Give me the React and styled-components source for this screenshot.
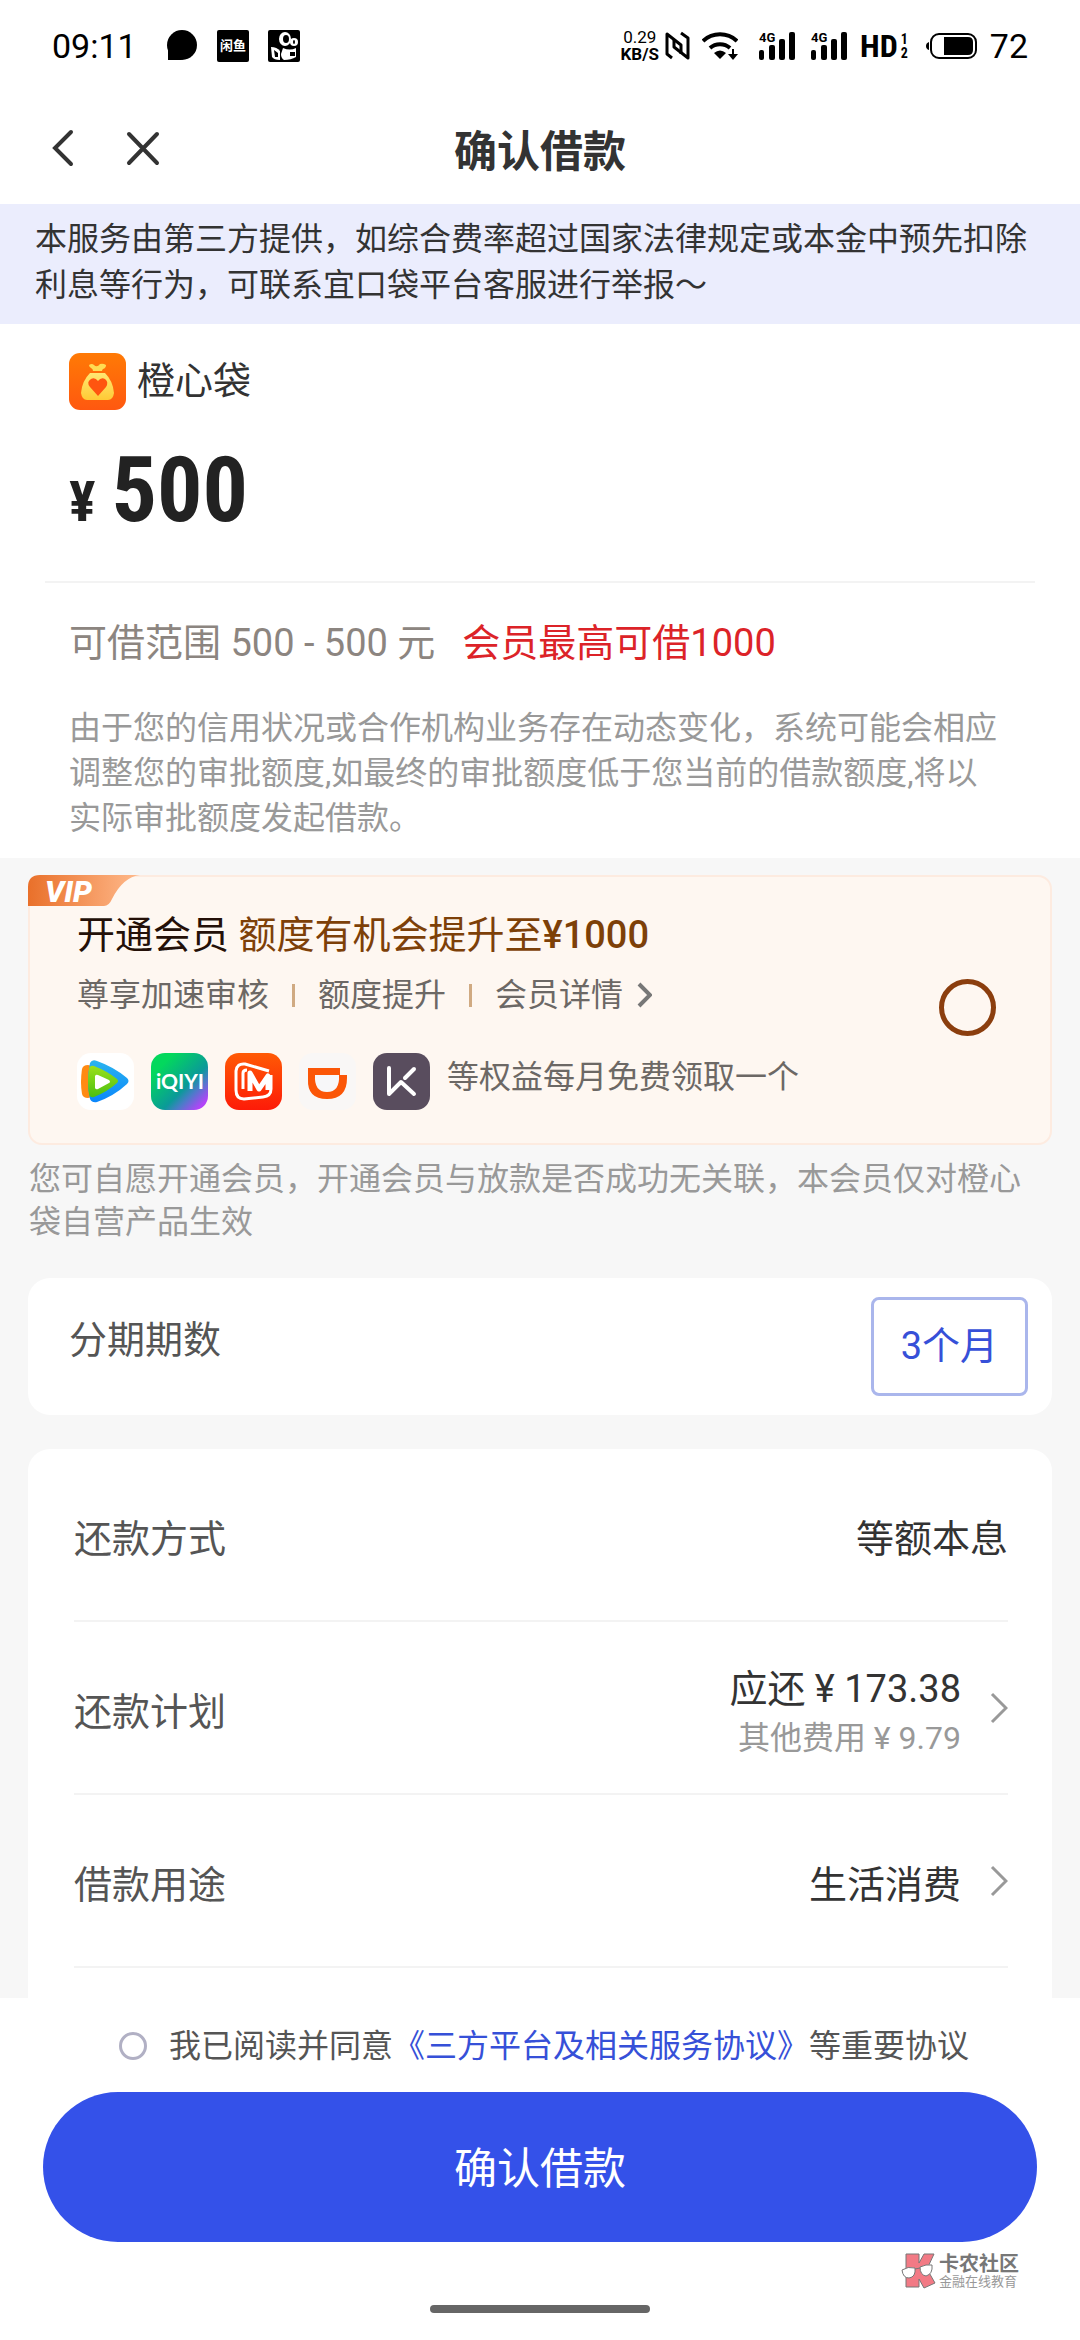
import React, { useState } from "react";
import styled, { createGlobalStyle } from "styled-components";

const rows = [
  { label: "还款方式", value: "等额本息" },
  { label: "还款计划", value: "应还 ¥ 173.38", extra: "其他费用 ¥ 9.79", link: true },
  { label: "借款用途", value: "生活消费", link: true },
];

const Chevron = ({ size, width, color }) => (
  <svg width={size / 2 + 2} height={size} viewBox={`0 0 ${size / 2 + 2} ${size}`} fill="none" stroke={color} strokeWidth={width}>
    <path d={`M2 2 L${size / 2} ${size / 2} L2 ${size - 2}`} />
  </svg>
);

const Signal = () => (
  <svg width="38" height="30" viewBox="0 0 38 30">
    <rect x="1" y="19" width="5" height="10" rx="2" />
    <rect x="11" y="14" width="6" height="15" rx="2" />
    <rect x="21" y="8" width="6" height="21" rx="2" />
    <rect x="31" y="1" width="6" height="28" rx="2" />
    <text x="1" y="11" fontSize="13" fontWeight="700" fontFamily="Roboto, sans-serif">4G</text>
  </svg>
);

const StatusIcons = () => (
  <>
    <svg width="32" height="32" viewBox="0 0 32 32">
      <circle cx="16" cy="15" r="15" />
      <path d="M2 16v14h14z" />
    </svg>
    <svg width="32" height="32" viewBox="0 0 32 32">
      <rect width="32" height="32" rx="2" />
      <text x="3" y="20" fontSize="13" fontWeight="700" fill="#fff" fontFamily="Noto Sans CJK SC, sans-serif">闲鱼</text>
    </svg>
    <svg width="32" height="32" viewBox="0 0 32 32">
      <rect width="32" height="32" rx="2" />
      <g fill="#fff">
        <ellipse cx="17" cy="9" rx="6" ry="7" />
        <ellipse cx="26" cy="12" rx="4" ry="4" />
        <path d="M3 17q6 0 9 4v9q-6 0-8-3z" />
        <path d="M15 18q7 3 13 0v9q-5 3-12 3q-3-2-3-6z" />
      </g>
      <ellipse cx="18" cy="9" rx="3" ry="4" />
      <ellipse cx="26" cy="12" rx="1" ry="2" />
      <path d="M6 20l4 3v4H7zM22 22h5v4h-5z" />
    </svg>
  </>
);

const NfcIcon = () => (
  <svg width="25" height="30" viewBox="0 0 25 30" fill="none" stroke="#000" strokeWidth="3" strokeLinejoin="round">
    <path d="M7 27L2 23V3l14 11v9" />
    <path d="M16 2l7 5v20L9 16V9" />
  </svg>
);

const WifiIcon = () => (
  <svg width="36" height="30" viewBox="0 0 36 30" fill="none" stroke="#000" strokeWidth="4">
    <path d="M1 10a25 25 0 0 1 34 0" />
    <path d="M8 17a15 15 0 0 1 20 0" />
    <path d="M12 22q6-5 12 0l-6 6z" fill="#000" stroke="none" />
    <path d="M31 18v7" strokeWidth="2" />
    <path d="M26 23h10l-5 6z" fill="#000" stroke="none" />
  </svg>
);

const BatteryIcon = () => (
  <svg width="52" height="28" viewBox="0 0 52 28">
    <path d="M3 10v8q-3-1-3-4t3-4z" />
    <rect x="5" y="2" width="45" height="24" rx="8" fill="none" stroke="#000" strokeWidth="2" />
    <path d="M18 5h24q5 0 5 5v8q0 5-5 5H18z" />
  </svg>
);

const BagLogo = () => (
  <svg width="57" height="57" viewBox="0 0 57 57">
    <defs>
      <linearGradient id="bagBg" x1="0" y1="0" x2="0" y2="1">
        <stop offset="0" stopColor="#ff7a05" />
        <stop offset="1" stopColor="#ff5810" />
      </linearGradient>
      <linearGradient id="bagBody" x1="0" y1="0" x2="0" y2="1">
        <stop offset="0" stopColor="#ffe873" />
        <stop offset="1" stopColor="#ffca35" />
      </linearGradient>
    </defs>
    <rect width="57" height="57" rx="11" fill="url(#bagBg)" />
    <path d="M20 12q3-2 5 0q3 3 6-1q3-1 6 1q0 3-3 4q-1 1-1 2h-9q0-2-2-3q-2-1-2-3z" fill="#ffdc52" />
    <path d="M21 20h15q8 8 9 20q-1 7-6 7H18q-5 0-6-7q1-12 9-20z" fill="url(#bagBody)" />
    <path d="M29 43L21 34q-4-5 1-8q4-2 7 2q3-4 7-2q4 3 1 8z" fill="#ff5510" />
  </svg>
);

const TencentLogo = () => (
  <svg width="57" height="57" viewBox="0 0 57 57">
    <defs>
      <linearGradient id="tencentGreen" x1="0" y1="0" x2="0" y2="1">
        <stop offset="0" stopColor="#9be01a" />
        <stop offset="1" stopColor="#4cbf10" />
      </linearGradient>
      <linearGradient id="tencentBlue" x1="0" y1="0" x2="0" y2="1">
        <stop offset="0" stopColor="#2bb4ee" />
        <stop offset="1" stopColor="#0a86fb" />
      </linearGradient>
    </defs>
    <rect width="57" height="57" rx="14" fill="#fff" />
    <path d="M5 16q1-4 6-4l4 1v31l-4 1q-5 0-6-4q-2-12 0-25z" fill="#ff8a12" />
    <path d="M13 10q2-4 7-2q17 6 30 17q3 3 0 6q-13 12-30 18q-5 1-7-3q-4-18 0-36z" fill="url(#tencentBlue)" />
    <path d="M12 16q1-4 5-3q13 5 23 13q2 2 0 4q-10 9-23 14q-4 1-5-3q-2-13 0-25z" fill="url(#tencentGreen)" />
    <path d="M18 23q1-2 3-1l11 5q2 2 0 3l-11 6q-2 1-3-1z" fill="#fff" />
  </svg>
);

const IqiyiLogo = () => (
  <svg width="57" height="57" viewBox="0 0 57 57">
    <defs>
      <linearGradient id="iqiyi" x1="0" y1="0" x2="1" y2="1">
        <stop offset="0.2" stopColor="#03d85d" />
        <stop offset="0.6" stopColor="#0a9a98" />
        <stop offset="0.72" stopColor="#4a7cc8" />
        <stop offset="0.9" stopColor="#b244f8" />
      </linearGradient>
    </defs>
    <rect width="57" height="57" rx="14" fill="url(#iqiyi)" />
    <text x="29" y="36" fontSize="21" fontWeight="700" fill="#fff" textAnchor="middle" fontFamily="Lato, sans-serif">iQIYI</text>
  </svg>
);

const MangoLogo = () => (
  <svg width="57" height="57" viewBox="0 0 57 57" fill="none" stroke="#fff" strokeLinejoin="round">
    <defs>
      <linearGradient id="mango" x1="0" y1="0" x2="0" y2="1">
        <stop offset="0" stopColor="#ff5a05" />
        <stop offset="1" stopColor="#fd1b08" />
      </linearGradient>
    </defs>
    <rect width="57" height="57" rx="14" fill="url(#mango)" stroke="none" />
    <path d="M44 18L20 11q-8-1-9 7v19q0 9 8 9l19-2q8-1 8-8V22" strokeWidth="3" />
    <path d="M18 36V20q0-3 4-3" strokeWidth="3" />
    <path d="M25 38V20l9 16l9-13v14" strokeWidth="5" />
  </svg>
);

const DidiLogo = () => (
  <svg width="57" height="57" viewBox="0 0 57 57">
    <rect width="57" height="57" rx="14" fill="#f9f7f6" />
    <path d="M9 15h32v7h7v3q0 21-20 21T9 26z" fill="#fb5607" />
    <path d="M16 22h24q1 17-12 17T16 22z" fill="#f7f7f9" />
  </svg>
);

const KeepLogo = () => (
  <svg width="57" height="57" viewBox="0 0 57 57" fill="none" stroke="#fff" strokeWidth="4" strokeLinecap="round" strokeLinejoin="round">
    <rect width="57" height="57" rx="14" fill="#594d5e" stroke="none" />
    <path d="M16 15v26L28 29L41 41" />
    <path d="M32 25l9-9" />
  </svg>
);

const VipBadge = () => (
  <svg width="112" height="31" viewBox="0 0 112 31" overflow="visible">
    <defs>
      <linearGradient id="vip" x1="0" y1="0" x2="1" y2="0">
        <stop offset="0" stopColor="#e9702a" />
        <stop offset="1" stopColor="#ffba8c" />
      </linearGradient>
    </defs>
    <path d="M0 31V12Q0 0 12 0h100q-17 2-28 24q-3 7-8 7z" fill="url(#vip)" />
    <text x="17" y="27" fontSize="30" fontWeight="900" fontStyle="italic" fill="#fff" fontFamily="Roboto, sans-serif">VIP</text>
  </svg>
);

const WatermarkLogo = () => (
  <svg width="36" height="36" viewBox="0 0 36 36" stroke="#777" strokeWidth="1">
    <path d="M5 1h13v9l5-9h10l-7 15l8 14l-11 5l-5-9v8H5z" fill="#f27a85" />
    <path d="M1 17q6-4 13-2q1 9-6 10q-6 0-7-8z" fill="#fff" />
    <path d="M19 14q6-3 12-2q1 9-6 11q-6-1-6-9z" fill="#fff" />
    <path d="M14 16l5-1" />
  </svg>
);

const App = () => {
  const [vip, setVip] = useState(false);
  const [agreed, setAgreed] = useState(false);

  return (
    <Page>
      <GlobalStyle />
      <StatusBar>
        <Clock>09:11</Clock>
        <StatusIcons />
        <StatusRight>
          <Network>
            <Speed>
              <span>0.29</span>
              <b>KB/S</b>
            </Speed>
            <NfcIcon />
          </Network>
          <WifiIcon />
          <Signals>
            <Signal />
            <Signal />
          </Signals>
          <Hd>
            HD
            <HdNumbers>
              <span>1</span>
              <span>2</span>
            </HdNumbers>
          </Hd>
          <BatteryIcon />
          <Clock>72</Clock>
        </StatusRight>
      </StatusBar>
      <Header>
        <HeaderButtons>
          <IconButton aria-label="返回">
            <svg width="24" height="38" viewBox="0 0 24 38" fill="none" stroke="#333" strokeWidth="4" strokeLinecap="round">
              <path d="M19 3L3 19l16 16" />
            </svg>
          </IconButton>
          <IconButton aria-label="关闭">
            <svg width="34" height="38" viewBox="0 0 34 38" fill="none" stroke="#333" strokeWidth="4" strokeLinecap="round">
              <path d="M3 5l28 29M31 5L3 34" />
            </svg>
          </IconButton>
        </HeaderButtons>
        <Title>确认借款</Title>
      </Header>
      <Notice>
        本服务由第三方提供，如综合费率超过国家法律规定或本金中预先扣除利息等行为，可联系宜口袋平台客服进行举报～
      </Notice>
      <Loan>
        <Product>
          <BagLogo />
          橙心袋
        </Product>
        <Amount>
          <Yen>¥</Yen>500
        </Amount>
        <Range>
          <span>可借范围 500 - 500 元</span>
          <RangeVip>会员最高可借1000</RangeVip>
        </Range>
        <Hint>
          由于您的信用状况或合作机构业务存在动态变化，系统可能会相应调整您的审批额度,如最终的审批额度低于您当前的借款额度,将以实际审批额度发起借款。
        </Hint>
      </Loan>
      <Content>
        <VipCard>
          <Badge>
            <VipBadge />
          </Badge>
          <div>
            <VipTitle>
              开通会员 <Brown>额度有机会提升至<b>¥1000</b></Brown>
            </VipTitle>
            <Perks>
              <span>尊享加速审核</span>
              <Bar />
              <span>额度提升</span>
              <Bar />
              <PerkLink href="#vip">
                会员详情
                <Chevron size={26} width={4} color="#777" />
              </PerkLink>
            </Perks>
            <Apps>
              <TencentLogo />
              <IqiyiLogo />
              <MangoLogo />
              <DidiLogo />
              <KeepLogo />
              <AppsText>等权益每月免费领取一个</AppsText>
            </Apps>
          </div>
          <VipCheck
            type="checkbox"
            aria-label="开通会员"
            checked={vip}
            onChange={(e) => setVip(e.target.checked)}
          />
        </VipCard>
        <Note>
          您可自愿开通会员，开通会员与放款是否成功无关联，本会员仅对橙心袋自营产品生效
        </Note>
        <TermCard>
          <TermLabel>分期期数</TermLabel>
          <TermButton>3个月</TermButton>
        </TermCard>
        <Details>
          {rows.map((row) => (
            <Row key={row.label}>
              <RowText>{row.label}</RowText>
              <RowValue>
                <RowText>
                  {row.value}
                  {row.extra && <Extra>{row.extra}</Extra>}
                </RowText>
                {row.link && <Chevron size={32} width={3} color="#999" />}
              </RowValue>
            </Row>
          ))}
        </Details>
      </Content>
      <Footer>
        <Agreement>
          <AgreeCheck
            id="agree"
            type="checkbox"
            checked={agreed}
            onChange={(e) => setAgreed(e.target.checked)}
          />
          <label htmlFor="agree">
            我已阅读并同意<Link href="#agreement">《三方平台及相关服务协议》</Link>等重要协议
          </label>
        </Agreement>
        <Submit>确认借款</Submit>
        <Watermark>
          <WatermarkLogo />
          <div>
            <Brand>卡农社区</Brand>
            <Slogan>金融在线教育</Slogan>
          </div>
        </Watermark>
        <HomeBar />
      </Footer>
    </Page>
  );
};

const GlobalStyle = createGlobalStyle`
  * {
    box-sizing: border-box;
  }
  body {
    margin: 0;
    background: #fff;
    font-family: Roboto, "Noto Sans CJK SC", sans-serif;
  }
  button {
    font-family: inherit;
  }
  svg {
    display: block;
    flex-shrink: 0;
  }
`;

const Page = styled.div`
  min-height: 100vh;
  display: flex;
  flex-direction: column;
`;

const StatusBar = styled.div`
  height: 92px;
  padding: 0 52px;
  display: flex;
  align-items: center;
  gap: 19px;
  color: #000;
`;

const Clock = styled.span`
  margin-right: 10px;
  font-size: 34px;
`;

const StatusRight = styled.div`
  margin-left: auto;
  display: flex;
  align-items: center;
  gap: 12px;

  ${Clock} {
    margin: 0;
  }
`;

const Network = styled.div`
  display: flex;
  align-items: center;
  gap: 6px;
`;

const Speed = styled.div`
  display: flex;
  flex-direction: column;
  align-items: center;
  font-size: 17px;
  line-height: 17px;
`;

const Signals = styled.div`
  margin-left: 8px;
  display: flex;
  gap: 14px;
`;

const Hd = styled.div`
  margin-right: 6px;
  display: flex;
  align-items: center;
  gap: 3px;
  font-size: 32px;
  font-weight: 700;
  font-family: "Roboto Condensed", Roboto, sans-serif;
`;

const HdNumbers = styled.div`
  display: flex;
  flex-direction: column;
  font-size: 14px;
  line-height: 14px;
`;

const Header = styled.header`
  height: 112px;
  padding: 0 52px;
  display: grid;
  grid-template-columns: 1fr auto 1fr;
  align-items: center;
`;

const HeaderButtons = styled.div`
  display: flex;
  gap: 50px;
`;

const IconButton = styled.button`
  padding: 0;
  border: none;
  background: none;
  cursor: pointer;
`;

const Title = styled.h1`
  margin: 0;
  font-size: 43px;
  font-weight: 700;
  color: #333;
`;

const Notice = styled.p`
  margin: 0;
  padding: 12px 35px 16px;
  background: #ebedfd;
  color: #333;
  font-size: 32px;
  line-height: 46px;
`;

const Loan = styled.section`
  padding: 29px 45px 17px;
`;

const Product = styled.div`
  padding: 0 24px;
  display: flex;
  align-items: center;
  gap: 11px;
  font-size: 38px;
  line-height: 57px;
  color: #333;
`;

const Amount = styled.div`
  height: 173px;
  padding: 36px 24px 0;
  border-bottom: 2px solid #f3f3f3;
  font-family: "Roboto Condensed", Roboto, sans-serif;
  font-size: 90px;
  line-height: 90px;
  font-weight: 700;
  color: #222;
`;

const Yen = styled.span`
  margin-right: 16px;
  font-size: 56px;
`;

const Range = styled.div`
  padding: 33px 24px 35px;
  display: flex;
  gap: 27px;
  font-size: 38px;
  line-height: 55px;
  color: #8c8580;
`;

const RangeVip = styled.span`
  color: #dc2328;
`;

const Hint = styled.p`
  margin: 0;
  padding: 0 36px 0 24px;
  font-size: 32px;
  line-height: 45px;
  color: #999;
`;

const Content = styled.main`
  flex: 1;
  display: flex;
  flex-direction: column;
  padding: 17px 28px 0;
  background: #f7f7f7;
`;

const VipCard = styled.section`
  position: relative;
  padding: 28px 54px 33px 47px;
  display: flex;
  align-items: center;
  justify-content: space-between;
  border: 2px solid #fdebe0;
  border-radius: 14px;
  background: #fef7f1;
`;

const Badge = styled.div`
  position: absolute;
  top: -2px;
  left: -2px;
`;

const VipTitle = styled.h2`
  margin: 0;
  font-size: 38px;
  line-height: 60px;
  font-weight: 400;
  color: #241008;
`;

const Brown = styled.span`
  color: #7d4008;

  b {
    font-weight: 500;
  }
`;

const Perks = styled.div`
  display: flex;
  align-items: center;
  gap: 23px;
  font-size: 32px;
  line-height: 60px;
  color: #6c6865;
`;

const Bar = styled.span`
  width: 3px;
  height: 23px;
  background: #d0aa82;
`;

const PerkLink = styled.a`
  display: flex;
  align-items: center;
  gap: 14px;
  color: inherit;
  text-decoration: none;
`;

const Apps = styled.div`
  margin-top: 28px;
  display: flex;
  align-items: center;
  gap: 17px;
`;

const AppsText = styled.span`
  padding-bottom: 10px;
  font-size: 32px;
  line-height: 46px;
  color: #6c6865;
`;

const VipCheck = styled.input`
  appearance: none;
  width: 57px;
  height: 57px;
  margin: 0;
  border: 5px solid #8b3e0e;
  border-radius: 50%;

  &:checked {
    background: #8b3e0e;
  }
`;

const Note = styled.p`
  margin: 0 0 34px;
  padding: 13px 1px 0;
  font-size: 32px;
  line-height: 43px;
  color: #999;
`;

const TermCard = styled.section`
  margin-bottom: 34px;
  padding: 19px 24px 19px 41px;
  display: flex;
  align-items: flex-start;
  justify-content: space-between;
  border-radius: 22px;
  background: #fff;
`;

const TermLabel = styled.span`
  font-size: 38px;
  line-height: 86px;
  color: #555;
`;

const TermButton = styled.button`
  padding: 0 27px;
  border: 3px solid #aab6ec;
  border-radius: 8px;
  background: #fff;
  color: #3650d8;
  font-size: 38px;
  line-height: 93px;
`;

const Details = styled.section`
  flex: 1;
  padding: 0 44px 30px 46px;
  border-radius: 22px 22px 0 0;
  background: #fff;
`;

const Row = styled.div`
  min-height: 173px;
  display: flex;
  align-items: center;
  justify-content: space-between;
  border-bottom: 2px solid #f3f3f3;
  font-size: 38px;
  line-height: 52px;
  color: #555;
`;

const RowText = styled.div`
  padding-top: 8px;
`;

const RowValue = styled.div`
  display: flex;
  align-items: center;
  gap: 29px;
  text-align: right;
  color: #333;
`;

const Extra = styled.div`
  font-size: 32px;
  line-height: 46px;
  color: #999;
`;

const Footer = styled.footer`
  padding: 24px 43px 27px;
  display: flex;
  flex-direction: column;
  background: #fff;
`;

const Agreement = styled.div`
  padding-left: 8px;
  display: flex;
  align-items: center;
  justify-content: center;
  gap: 22px;
  font-size: 32px;
  line-height: 48px;
  color: #555;
`;

const AgreeCheck = styled.input`
  appearance: none;
  width: 28px;
  height: 28px;
  margin: 0;
  border: 3px solid #b1b0c4;
  border-radius: 50%;

  &:checked {
    background: #3451e8;
  }
`;

const Link = styled.a`
  color: #3650d8;
  text-decoration: none;
`;

const Submit = styled.button`
  margin-top: 22px;
  padding-top: 5px;
  border: none;
  border-radius: 75px;
  background: #3451e9;
  color: #fff;
  font-size: 43px;
  line-height: 144px;
  cursor: pointer;
`;

const Watermark = styled.div`
  margin: 11px 18px 0 0;
  display: flex;
  align-self: flex-end;
  gap: 2px;
  color: #777;
`;

const Brand = styled.div`
  font-size: 20px;
  line-height: 22px;
  font-weight: 700;
`;

const Slogan = styled.div`
  font-size: 13px;
  line-height: 14px;
  color: #999;
`;

const HomeBar = styled.div`
  width: 220px;
  height: 8px;
  margin-top: 16px;
  align-self: center;
  border-radius: 4px;
  background: #666;
`;

export default App;
